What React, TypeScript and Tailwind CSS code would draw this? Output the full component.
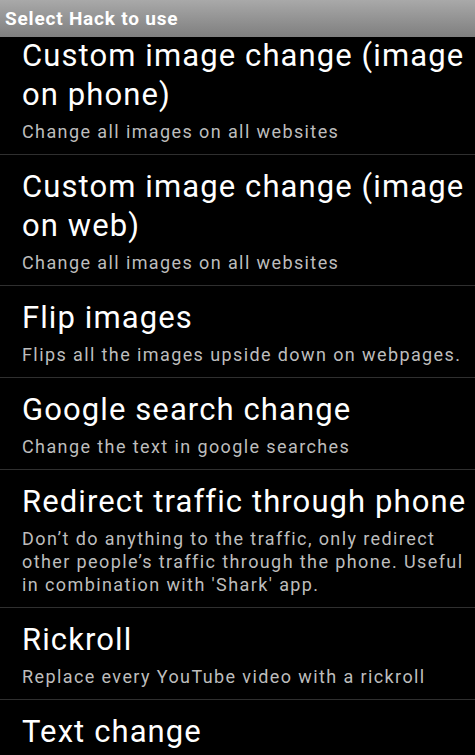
const hacks = [
  {
    title: 'Custom image change (image on phone)',
    desc: 'Change all images on all websites',
  },
  {
    title: 'Custom image change (image on web)',
    desc: 'Change all images on all websites',
  },
  { title: 'Flip images', desc: 'Flips all the images upside down on webpages.' },
  { title: 'Google search change', desc: 'Change the text in google searches' },
  {
    title: 'Redirect traffic through phone',
    desc: "Don\u2019t do anything to the traffic, only redirect other people\u2019s traffic through the phone. Useful in combination with 'Shark' app.",
  },
  { title: 'Rickroll', desc: 'Replace every YouTube video with a rickroll' },
  { title: 'Text change', desc: 'Change all text on all websites' },
];

export default function App() {
  return (
    <div className="flex h-[755px] w-[475px] flex-col overflow-hidden bg-black font-['Roboto',sans-serif]">
      <div className="flex h-[37px] shrink-0 items-center bg-gradient-to-b from-[#a9a9a9] to-[#7f7f7f] px-[5px]">
        <span className="text-[19px] font-bold leading-none tracking-[0.8px] text-white">Select Hack to use</span>
      </div>

      {/* list is scrolled a little, first row is cut under the title bar */}
      <div className="min-h-0 flex-1 overflow-hidden">
        <ul className="-mt-[13px]">
          {hacks.map((h) => (
            <li key={h.title} className="border-b border-[#2f2f2f] pb-[11px] pl-[22px] pr-[6px] pt-[12px]">
              <div className="text-[31px] leading-[39px] tracking-[1.1px] text-white">{h.title}</div>
              <div className="mt-[6px] text-[18px] leading-[23px] tracking-[1.4px] text-[#bdbdbd]">{h.desc}</div>
            </li>
          ))}
        </ul>
      </div>
    </div>
  );
}
